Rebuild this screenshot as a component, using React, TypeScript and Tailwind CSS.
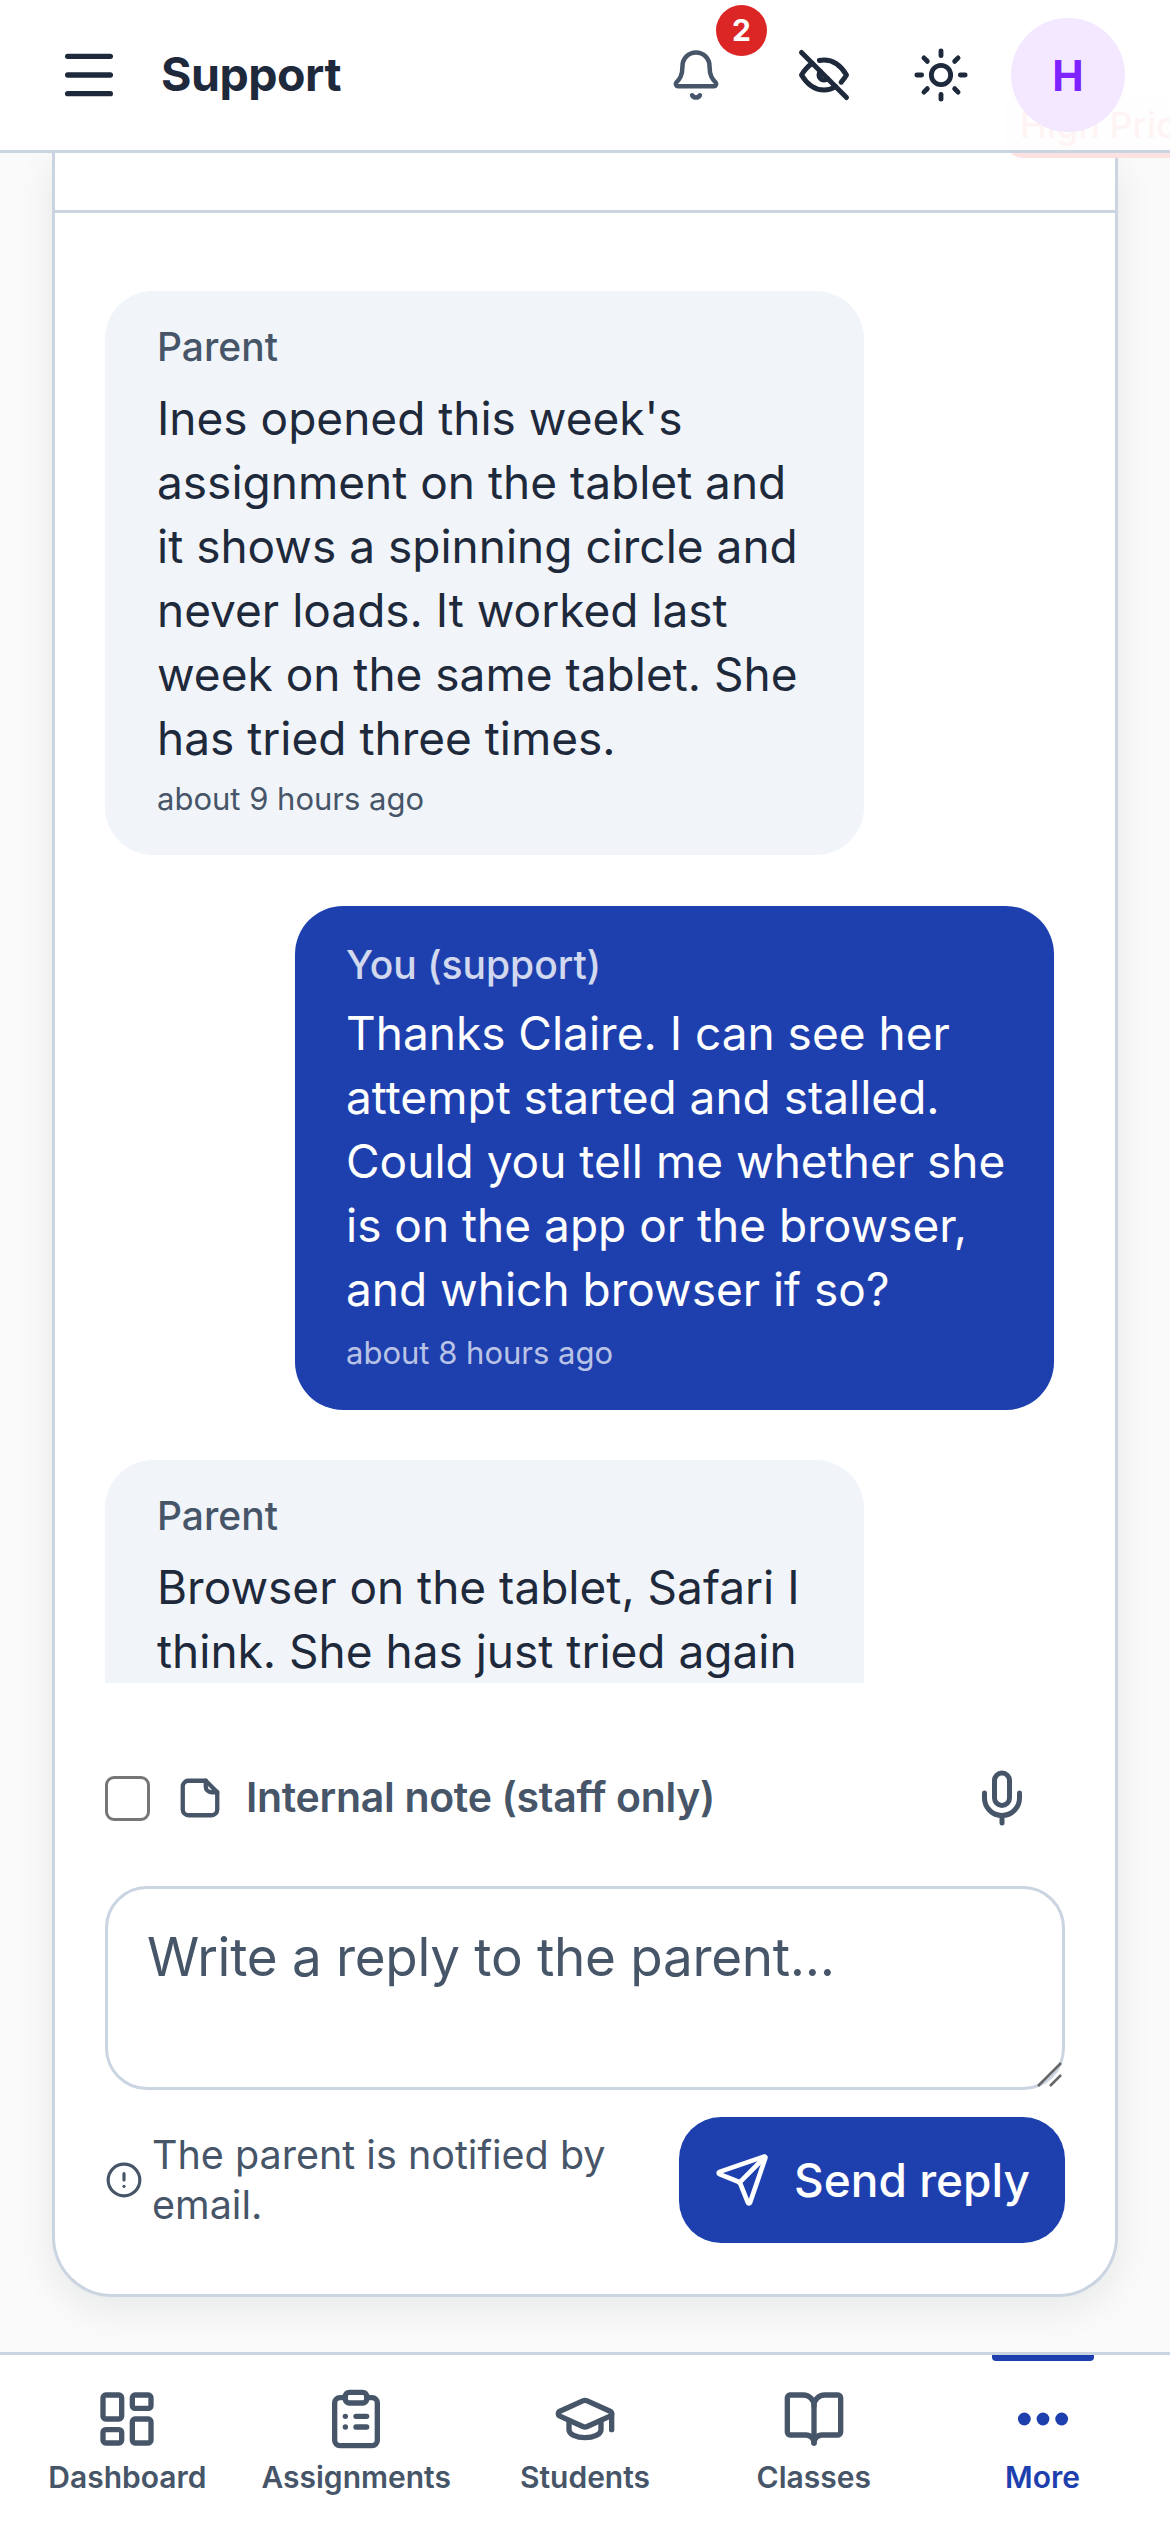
import React from "react";
import { Bell, BookOpen, CircleAlert, GraduationCap, LayoutDashboard, Menu, Mic, Send, Sun } from "lucide-react";

const ClipboardIcon = () => (
  <svg width="64" height="64" viewBox="0 0 24 24" fill="none" stroke="currentColor" strokeWidth="2" strokeLinecap="round" strokeLinejoin="round">
    <rect x="8" y="2" width="8" height="4" rx="1.5" />
    <path d="M16 4h2a2 2 0 0 1 2 2v14a2 2 0 0 1-2 2H6a2 2 0 0 1-2-2V6a2 2 0 0 1 2-2h2" />
    <path d="M12 11h4M12 15h4M8 11h.01M8 15h.01" />
  </svg>
);

const DotsIcon = () => (
  <svg width="64" height="64" viewBox="0 0 24 24" fill="currentColor">
    <circle cx="5" cy="12" r="2.4" />
    <circle cx="12" cy="12" r="2.4" />
    <circle cx="19" cy="12" r="2.4" />
  </svg>
);

const EyeOffIcon = () => (
  <svg width="60" height="60" viewBox="0 0 24 24" fill="none" stroke="currentColor" strokeWidth="2" strokeLinecap="round" strokeLinejoin="round">
    <path d="M10.585 10.587a2 2 0 0 0 2.829 2.828" />
    <path d="M16.681 16.673a8.717 8.717 0 0 1-4.681 1.327c-3.6 0-6.6-2-9-6c1.272-2.12 2.712-3.678 4.32-4.674m2.86-1.146a9.055 9.055 0 0 1 1.82-.18c3.6 0 6.6 2 9 6c-.666 1.11-1.379 2.067-2.138 2.87" />
    <path d="M3 3l18 18" />
  </svg>
);

const NoteIcon = () => (
  <svg width="46" height="46" viewBox="0 0 24 24" fill="none" stroke="currentColor" strokeWidth="2.25" strokeLinecap="round" strokeLinejoin="round">
    <path d="M6 3h9l6 6v9a3 3 0 0 1-3 3H6a3 3 0 0 1-3-3V6a3 3 0 0 1 3-3z" />
    <path d="M15 3v3a3 3 0 0 0 3 3h3" />
  </svg>
);

const navItems = [
  { label: "Dashboard", icon: <LayoutDashboard size={64} strokeWidth={2} /> },
  { label: "Assignments", icon: <ClipboardIcon /> },
  { label: "Students", icon: <GraduationCap size={64} strokeWidth={2} /> },
  { label: "Classes", icon: <BookOpen size={64} strokeWidth={2} /> },
  { label: "More", icon: <DotsIcon />, active: true },
];

const ParentBubble = ({ time, children }: { time?: string; children: React.ReactNode }) => (
  <div className="w-[759px] rounded-[48px] bg-[#f1f5f9] px-[52px] pt-[32px] pb-[34px]">
    <div className="text-[39px] leading-[48px] font-medium text-[#475569]">Parent</div>
    <p className="mt-[15px] text-[46px] leading-[64px] text-[#1e293b]">{children}</p>
    {time && <div className="mt-[6px] text-[31px] leading-[45px] text-[#475569]">{time}</div>}
  </div>
);

export default function App() {
  return (
    <div className="relative flex h-[2532px] w-[1170px] flex-col overflow-hidden bg-[#fafafa] font-['Inter',sans-serif]">
      <header className="relative z-10 flex h-[153px] shrink-0 items-center border-b-[3px] border-[#cbd5e1] bg-white/95 pl-[57px] pr-[45px]">
        <Menu size={64} strokeWidth={2} className="text-[#1e293b]" />
        <h1 className="ml-[40px] text-[46.5px] font-bold tracking-[-0.5px] text-[#1e293b]">Support</h1>
        <div className="ml-auto flex items-center">
          <div className="relative flex h-[64px] w-[64px] items-center justify-center text-[#475569]">
            <Bell size={54} strokeWidth={2} />
            <span className="absolute left-[52px] top-[-38px] flex h-[51px] w-[51px] items-center justify-center rounded-full bg-[#dc2626] text-[30px] font-bold text-white">2</span>
          </div>
          <div className="ml-[66px] text-[#1e293b]"><EyeOffIcon /></div>
          <div className="ml-[58px] text-[#1e293b]"><Sun size={58} strokeWidth={2} /></div>
          <div className="ml-[41px] flex h-[114px] w-[114px] items-center justify-center rounded-full bg-[#f3e8ff] text-[42px] font-bold text-[#7e22ff]">H</div>
        </div>
      </header>

      <main className="min-h-0 flex-1 px-[52px] pb-[55px]">
        <div className="relative flex h-full flex-col rounded-b-[60px] border-x-[3px] border-b-[3px] border-[#cbd5e1] bg-white shadow-[0_12px_36px_rgba(15,23,42,0.08)]">
          <div className="absolute left-[950px] top-[-60px] w-[300px] rounded-[18px] bg-[#fee2e2] pl-[15px] text-[36px] leading-[65px] font-medium whitespace-nowrap text-[#dc2626]">High Priority</div>
          <div className="h-[60px] shrink-0 border-b-[3px] border-[#cbd5e1]" />
          <div className="flex h-[1470px] shrink-0 flex-col overflow-hidden pl-[50px] pr-[61px] pt-[78px]">
            <ParentBubble time="about 9 hours ago">
              Ines opened this week's assignment on the tablet and it shows a spinning circle and never loads. It worked last week on the same tablet. She has tried three times.
            </ParentBubble>
            <div className="mt-[51px] w-[759px] self-end rounded-[48px] bg-[#1e40af] pl-[51px] pr-[40px] pt-[35px] pb-[35px] text-white">
              <div className="text-[39px] leading-[48px] font-medium text-white/80">You (support)</div>
              <p className="mt-[12px] text-[46px] leading-[64px]">
                Thanks Claire. I can see her attempt started and stalled. Could you tell me whether she is on the app or the browser, and which browser if so?
              </p>
              <div className="mt-[9px] text-[31px] leading-[45px] text-white/70">about 8 hours ago</div>
            </div>
            <div className="mt-[50px] shrink-0">
              <ParentBubble>
                Browser on the tablet, Safari I think. She has just tried again and it is the same.
              </ParentBubble>
            </div>
          </div>

          <div className="flex flex-1 flex-col pl-[50px] pr-[50px]">
            <div className="mt-[92px] flex h-[46px] items-center">
              <input type="checkbox" className="h-[45px] w-[45px] appearance-none rounded-[9px] border-[3px] border-[#767676] bg-white" />
              <span className="ml-[27px] text-[#475569]"><NoteIcon /></span>
              <span className="ml-[23px] text-[41px] font-semibold tracking-[-0.3px] text-[#475569]">Internal note (staff only)</span>
              <Mic size={60} strokeWidth={2} className="ml-auto mr-[33px] text-[#475569]" />
            </div>
            <div className="relative mt-[65px] h-[204px]">
              <textarea
                placeholder="Write a reply to the parent..."
                className="h-full w-full resize-none rounded-[42px] border-[3px] border-[#cbd5e1] bg-white px-[39px] pt-[33px] text-[53px] leading-[70px] tracking-[-0.3px] text-[#1e293b] outline-none placeholder:text-[#475569] placeholder:opacity-100"
              />
              <svg width="26" height="26" viewBox="0 0 26 26" stroke="#666666" strokeWidth="2.5" className="absolute bottom-[3px] right-[3px]">
                <path d="M2 25 25 2M14 25 25 14" />
              </svg>
            </div>
            <div className="mt-[27px] flex items-center">
              <CircleAlert size={38} strokeWidth={2} className="shrink-0 text-[#475569]" />
              <p className="ml-[9px] w-[500px] text-[39.5px] leading-[50px] text-[#475569]">The parent is notified by email.</p>
              <button className="ml-auto flex h-[126px] w-[386px] items-center justify-center rounded-[42px] bg-[#1e40af] text-[46px] font-medium text-white">
                <Send size={56} strokeWidth={2} className="mr-[24px]" />
                Send reply
              </button>
            </div>
          </div>
        </div>
      </main>

      <nav className="flex h-[180px] shrink-0 border-t-[3px] border-[#cbd5e1] bg-white px-[13px]">
        {navItems.map((item) => (
          <div key={item.label} className={`relative flex flex-1 flex-col items-center pt-[32px] ${item.active ? "text-[#1e40af]" : "text-[#475569]"}`}>
            {item.active && <span className="absolute top-0 h-[6px] w-[102px] rounded-b-[4px] bg-[#1e40af]" />}
            {item.icon}
            <span className="mt-[4px] text-[30px] leading-[44px] font-semibold">{item.label}</span>
          </div>
        ))}
      </nav>
    </div>
  );
}
